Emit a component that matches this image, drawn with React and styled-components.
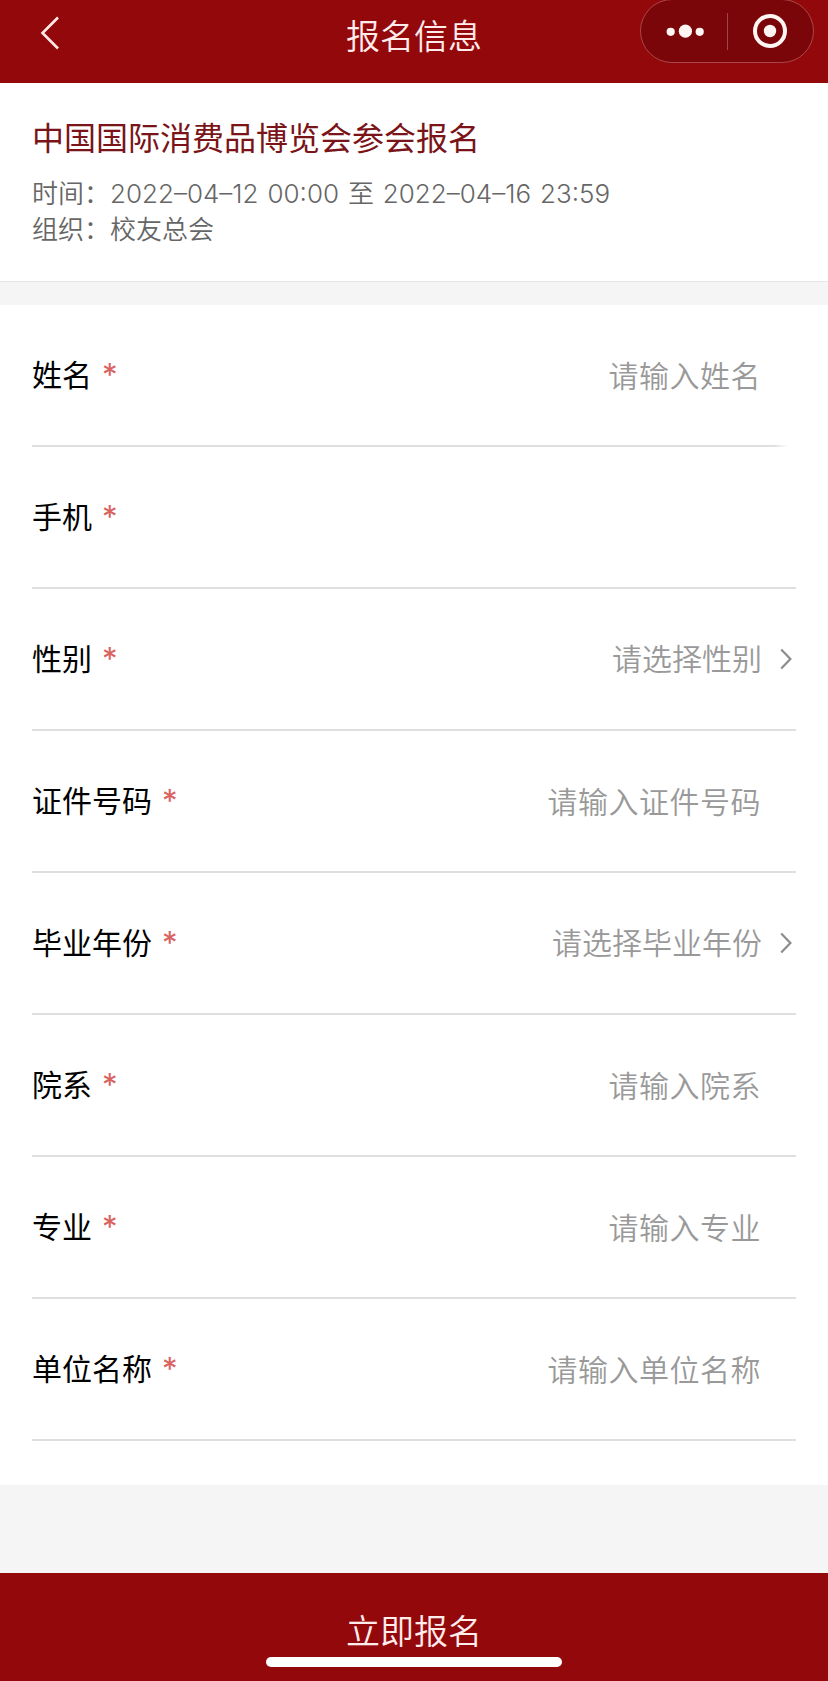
import styled, { createGlobalStyle } from "styled-components";

const fields = [
  { label: "姓名", placeholder: "请输入姓名", short: true },
  { label: "手机", placeholder: "" },
  { label: "性别", placeholder: "请选择性别", select: true },
  { label: "证件号码", placeholder: "请输入证件号码" },
  { label: "毕业年份", placeholder: "请选择毕业年份", select: true },
  { label: "院系", placeholder: "请输入院系" },
  { label: "专业", placeholder: "请输入专业" },
  { label: "单位名称", placeholder: "请输入单位名称" },
];

const App = () => {
  return (
    <Page>
      <GlobalStyle />
      <Header>
        <BackButton aria-label="返回">
          <svg width="20" height="36" viewBox="0 0 20 36" fill="none">
            <path d="M18 2.5L2.5 18L18 33.5" stroke="#ffe9e7" strokeWidth="2.6" />
          </svg>
        </BackButton>
        <HeaderTitle>报名信息</HeaderTitle>
        <Capsule>
          <svg width="38" height="16" viewBox="0 0 38 16" fill="#fff5f3">
            <circle cx="4.7" cy="8.8" r="4.1" />
            <circle cx="19.4" cy="8.2" r="6.6" />
            <circle cx="33.7" cy="8.8" r="4.1" />
          </svg>
          <Divider />
          <svg width="36" height="36" viewBox="0 0 36 36" fill="none">
            <circle cx="18" cy="18" r="15" stroke="#fff5f3" strokeWidth="4" />
            <circle cx="18" cy="18" r="6.2" fill="#fff5f3" />
          </svg>
        </Capsule>
      </Header>

      <Event>
        <EventTitle>中国国际消费品博览会参会报名</EventTitle>
        <EventInfo>时间：2022–04–12 00:00 至 2022–04–16 23:59</EventInfo>
        <EventInfo>组织：校友总会</EventInfo>
      </Event>

      <Form>
        {fields.map((field) => (
          <Row key={field.label} $short={field.short}>
            <Label>
              {field.label}
              <Required>*</Required>
            </Label>
            <Value $select={field.select}>{field.placeholder}</Value>
            {field.select && (
              <Arrow width="12" height="22" viewBox="0 0 12 22" fill="none">
                <path d="M1.2 1.6L10.4 11L1.2 20.4" stroke="#8c8c8c" strokeWidth="2.2" />
              </Arrow>
            )}
          </Row>
        ))}
      </Form>

      <Submit>
        立即报名
        <HomeBar />
      </Submit>
    </Page>
  );
};

export default App;

const GlobalStyle = createGlobalStyle`
  * {
    box-sizing: border-box;
  }

  body {
    margin: 0;
    background: #f5f5f5;
    font-family: Inter, "Noto Sans CJK SC", sans-serif;
  }
`;

const Page = styled.div`
  width: 828px;
  height: 1681px;
  display: flex;
  flex-direction: column;
  background: #f5f5f5;
  overflow: hidden;
`;

const Header = styled.header`
  height: 83px;
  flex-shrink: 0;
  display: grid;
  grid-template-columns: 1fr auto 1fr;
  align-items: start;
  background: #93080b;
`;

const BackButton = styled.button`
  width: 20px;
  height: 36px;
  margin: 15px 0 0 40px;
  padding: 0;
  border: none;
  background: none;
  cursor: pointer;
`;

const HeaderTitle = styled.h1`
  margin: 12px 0 0;
  font-size: 34px;
  line-height: 50px;
  font-weight: 350;
  color: #ffeceb;
`;

const Capsule = styled.div`
  width: 174px;
  height: 64px;
  margin: -1px 14px 0 0;
  padding: 0 25px 0 25px;
  justify-self: end;
  display: flex;
  align-items: center;
  justify-content: space-between;
  border: 1px solid #a9474a;
  border-radius: 32px;
  background: #7b0609;
`;

const Divider = styled.span`
  width: 1px;
  height: 37px;
  margin-right: 1px;
  background: #a04447;
`;

const Event = styled.section`
  height: 199px;
  flex-shrink: 0;
  padding: 34px 32px 0;
  background: #fff;
  border-bottom: 1px solid #e6e6e6;
`;

const EventTitle = styled.h2`
  margin: 0 0 15px;
  font-size: 32px;
  line-height: 44px;
  font-weight: 400;
  color: #7a1418;
`;

const EventInfo = styled.p`
  margin: 0;
  font-size: 26px;
  line-height: 36px;
  font-weight: 350;
  word-spacing: 1.6px;
  color: #666;
  white-space: nowrap;
`;

const Form = styled.main`
  height: 1180px;
  flex-shrink: 0;
  margin-top: 23px;
  padding: 0 32px;
  background: #fff;
`;

const Row = styled.div`
  height: 142px;
  display: flex;
  align-items: center;
  border-bottom: 2px solid #dfdfdf;
  ${({ $short }) =>
    $short &&
    `
    border-image: linear-gradient(to right, #dfdfdf 740px, #fff 754px) 2;
  `}
`;

const Label = styled.label`
  display: flex;
  align-items: center;
  margin-bottom: 1px;
  font-size: 30px;
  line-height: 44px;
  color: #000;
`;

const Required = styled.span`
  margin-left: 10px;
  font-size: 31px;
  line-height: 44px;
  padding-top: 1px;
  color: #d9645f;
`;

const Value = styled.span`
  margin: ${({ $select }) => ($select ? "0 18px" : "2px 35px")} 0 auto;
  font-size: 30px;
  line-height: 44px;
  font-weight: 350;
  letter-spacing: ${({ $select }) => ($select ? 0 : 0.5)}px;
  color: #999;
`;

const Arrow = styled.svg`
  margin-right: 4px;
`;

const Submit = styled.button`
  height: 108px;
  margin: auto 0 0;
  padding: 34px 0 0;
  flex-shrink: 0;
  display: flex;
  flex-direction: column;
  align-items: center;
  border: none;
  background: #93080b;
  color: #ffeceb;
  font-family: inherit;
  font-size: 34px;
  line-height: 50px;
  font-weight: 350;
  cursor: pointer;
`;

const HomeBar = styled.span`
  width: 296px;
  height: 10px;
  border-radius: 5px;
  background: #fff;
`;
